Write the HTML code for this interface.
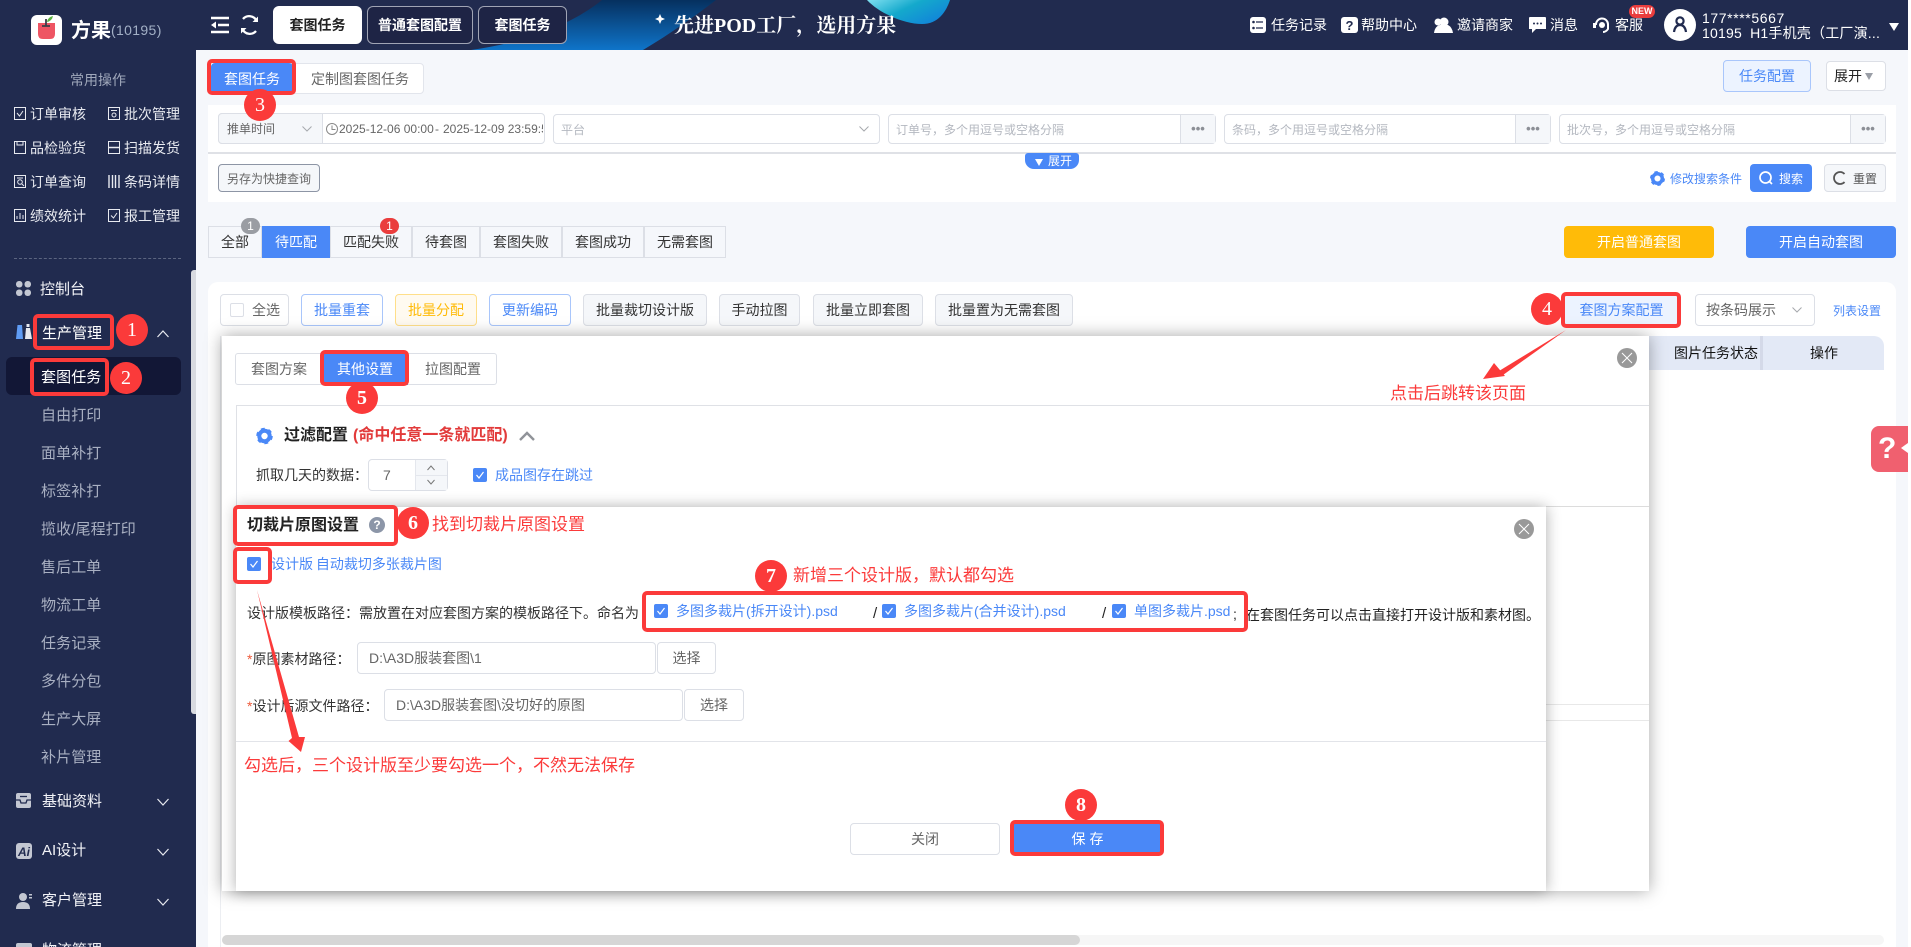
<!DOCTYPE html>
<html lang="zh">
<head>
<meta charset="utf-8">
<title>套图任务</title>
<style>
html,body{margin:0;padding:0;width:1911px;height:947px;overflow:hidden;background:#fff}
body{position:relative;font-family:"Liberation Sans","Noto Sans CJK SC",sans-serif;font-size:14px;color:#333}
*{box-sizing:border-box}
.a{position:absolute}
.t{position:absolute;white-space:nowrap;line-height:20px;height:20px}
.b{position:absolute;display:flex;align-items:center;justify-content:center;white-space:nowrap;border:1px solid #dcdfe6;border-radius:4px}
.r{position:absolute;border:4px solid #fb3a3a;border-radius:5px;pointer-events:none;z-index:50}
.c{position:absolute;width:32px;height:32px;border-radius:50%;background:#fb3a3a;color:#fff;font:20px/32px "Liberation Serif",serif;text-align:center;z-index:51}
.n{position:absolute;z-index:52;color:#fb3a3a;font-size:17px;line-height:24px;height:24px;white-space:nowrap}
.side{color:#e8eaf0;font-size:14px}
.sub{color:#a9b0c2;font-size:15px;left:41px;letter-spacing:.1px}
.main{color:#f2f3f7;font-size:15px;left:42px}
.ph{color:#b4b8c0;font-size:12px}
.hw{color:#fff;font-size:14px;top:15px}
.tab{background:#f5f7fb;border:1px solid #dcdfe6;border-radius:0;color:#333;top:226px;height:32px}
.gb{background:#f5f7fa;color:#333;top:294px;height:32px}
.bb{background:#fff;color:#4a88f7;border-color:#a9c6fb;top:294px;height:32px}
.more{position:absolute;background:#f5f7fa;border-left:1px solid #dcdfe6;top:0;bottom:0;right:0;width:35px;color:#8c8f96;text-align:center;font-size:13px;letter-spacing:0;line-height:27px;font-weight:bold}
.ck{position:absolute;width:14px;height:14px;border-radius:2px;background:#4a88f7;z-index:53}
.ck svg{position:absolute;left:2px;top:2px}
svg{display:block}
.ic{position:absolute;overflow:visible}
</style>
</head>
<body>

<!-- page bg -->
<div class="a" style="left:196px;top:50px;width:1712px;height:897px;background:#f5f7fb"></div>

<!-- top header -->
<div class="a" style="left:0;top:0;width:1908px;height:50px;background:#212b4f;overflow:hidden">
  <svg class="a" style="left:0;top:0" width="1908" height="50">
    <defs>
      <linearGradient id="g1" x1="0" y1="0" x2="0" y2="1"><stop offset="0" stop-color="#06305f"/><stop offset="1" stop-color="#0f74c9"/></linearGradient>
      <linearGradient id="g2" x1="0" y1="0" x2="1" y2="0.6"><stop offset="0" stop-color="#7fe0f0"/><stop offset=".5" stop-color="#14a9cc"/><stop offset="1" stop-color="#1286d8"/></linearGradient>
    </defs>
    <path d="M602 0 C575 22 530 42 471 50 L643 50 C670 34 695 16 716 0 Z" fill="url(#g1)"/>
    <path d="M867 0 C880 14 905 24 922 24 C938 24 946 12 950 0 Z" fill="url(#g2)"/>
    <path d="M660 14 L661.5 17.5 L665 19 L661.5 20.5 L660 24 L658.500 20.500 L655 19 L658.500 17.500 Z" fill="#fff"/>
  </svg>
</div>
<div class="a" style="left:0;top:0;width:196px;height:947px;background:#212b4f"></div>
<div class="a" style="left:191px;top:270px;width:5px;height:444px;background:#d8dae0;border-radius:3px 0 0 3px"></div>

<!-- logo -->
<div class="a" style="left:31px;top:15px;width:31px;height:30px;background:#fff;border-radius:6px"></div>
<svg class="ic" style="left:31px;top:15px" width="31" height="30"><path d="M7 8 H24 V19 Q24 24 19 24 H12 Q7 24 7 19 Z" fill="#ee5563"/><path d="M15 4 V11 M11 11 H19" stroke="#3b3f4a" stroke-width="1.800" fill="none"/><path d="M16 7 Q17 2 22 1 Q21 6 16 7Z" fill="#5bb341"/></svg>
<div class="t" style="left:71px;top:20px;color:#fff;font-size:20px;font-weight:bold;line-height:22px;height:22px">方果</div>
<div class="t" style="left:111px;top:20px;color:#a3b0c6;font-size:14px;letter-spacing:.35px">(10195)</div>

<!-- header controls -->
<svg class="ic" style="left:211px;top:17px" width="18" height="16"><path d="M0 1 H18 M7 8 H18 M0 15 H18" stroke="#fff" stroke-width="2.400"/><path d="M5 4.500 L0 8 L5 11.500 Z" fill="#fff"/></svg>
<svg class="ic" style="left:240px;top:15px" width="19" height="20" fill="none" stroke="#fff" stroke-width="2.300"><path d="M16.500 6 A8 8 0 0 0 3 4"/><path d="M2.500 14 A8 8 0 0 0 16 16"/><path d="M18 1.500 V7 H12.500" stroke-width="0" fill="#fff"/><path d="M1 18.500 V13 H6.500" stroke-width="0" fill="#fff"/></svg>
<div class="b" style="left:273px;top:6px;width:89px;height:38px;background:#fff;border:0;border-radius:6px;color:#222;font-weight:bold">套图任务</div>
<div class="b" style="left:367px;top:6px;width:106px;height:38px;background:#1e2445;border-color:#a0a4b4;border-radius:6px;color:#fff;font-weight:bold">普通套图配置</div>
<div class="b" style="left:478px;top:6px;width:89px;height:38px;background:#1e2445;border-color:#a0a4b4;border-radius:6px;color:#fff;font-weight:bold">套图任务</div>
<div class="t" style="left:674px;top:13px;color:#fff;font-family:'Liberation Serif','Noto Serif CJK SC',serif;font-size:20px;line-height:26px;height:26px;font-weight:bold">先进POD工厂，选用方果</div>

<!-- header right -->
<svg class="ic" style="left:1250px;top:17px" width="16" height="16"><rect width="16" height="16" rx="3" fill="#fff"/><path d="M6 5 H13 M6 11 H13" stroke="#212b4f" stroke-width="1.300"/><circle cx="3.500" cy="5" r="1.300" fill="#212b4f"/><circle cx="3.500" cy="11" r="1.300" fill="#212b4f"/></svg>
<div class="t hw" style="left:1271px">任务记录</div>
<svg class="ic" style="left:1341px;top:17px" width="17" height="16"><rect width="17" height="16" rx="3" fill="#fff"/><text x="8.500" y="13" text-anchor="middle" font-size="13" font-weight="bold" fill="#212b4f" font-family="Liberation Sans">?</text></svg>
<div class="t hw" style="left:1361px">帮助中心</div>
<svg class="ic" style="left:1433px;top:17px" width="20" height="16"><circle cx="11" cy="5" r="4.500" fill="#fff"/><path d="M1 16 Q2 9 7 8 L15 8 Q19 10 20 16 Z" fill="#fff"/><circle cx="5" cy="5" r="3.500" fill="#fff"/></svg>
<div class="t hw" style="left:1457px">邀请商家</div>
<svg class="ic" style="left:1529px;top:17px" width="17" height="16"><path d="M0 1 Q0 0 1 0 H16 Q17 0 17 1 V12 H7 L3 16 V12 H0 Z" fill="#fff"/><circle cx="5" cy="6.500" r="1" fill="#212b4f"/><circle cx="8.500" cy="6.500" r="1" fill="#212b4f"/><circle cx="12" cy="6.500" r="1" fill="#212b4f"/></svg>
<div class="t hw" style="left:1550px">消息</div>
<svg class="ic" style="left:1593px;top:17px" width="17" height="16" fill="none" stroke="#fff" stroke-width="2"><path d="M3 8 A6 6 0 0 1 15 7 V12 Q13 15 10 15"/><rect x="0" y="6" width="3" height="5" fill="#fff" stroke="none"/><circle cx="9" cy="8" r="3" fill="#fff" stroke="none"/></svg>
<div class="t hw" style="left:1615px">客服</div>
<div class="a" style="left:1629px;top:5px;width:26px;height:13px;background:#ea3d3d;border-radius:7px;color:#fff;font-size:9px;font-weight:bold;text-align:center;line-height:13px;z-index:3">NEW</div>
<div class="a" style="left:1664px;top:9px;width:32px;height:32px;border-radius:50%;background:#fff"></div>
<svg class="ic" style="left:1672px;top:16px" width="16" height="17" fill="none" stroke="#212b4f" stroke-width="2.200"><circle cx="8" cy="5" r="3.600"/><path d="M2 16 Q3 9 8 9 Q13 9 14 16"/></svg>
<div class="t" style="left:1702px;top:8px;color:#fff;letter-spacing:.6px">177****5667</div>
<div class="t" style="left:1702px;top:23px;color:#fff;letter-spacing:.2px">10195&nbsp; H1手机壳（工厂演...</div>
<div class="a" style="left:1889px;top:23px;width:0;height:0;border:5px solid transparent;border-top:8px solid #fff"></div>

<!-- sidebar quick -->
<div class="t" style="left:70px;top:70px;color:#a0a8bb">常用操作</div>
<svg class="ic" style="left:14px;top:107px" width="12" height="13" fill="none" stroke="#e8eaf0"><rect x=".5" y=".5" width="11" height="12"/><path d="M3 6 L5.500 9 L9 4"/></svg>
<div class="t side" style="left:30px;top:104px">订单审核</div>
<svg class="ic" style="left:108px;top:107px" width="12" height="13" fill="none" stroke="#e8eaf0"><rect x=".5" y=".5" width="11" height="12"/><path d="M3 3.500 H9"/><circle cx="6" cy="8" r="2"/></svg>
<div class="t side" style="left:124px;top:104px">批次管理</div>
<svg class="ic" style="left:14px;top:141px" width="12" height="13" fill="none" stroke="#e8eaf0"><rect x=".5" y=".5" width="11" height="12"/><path d="M3 .5 V4 H9 V.5"/></svg>
<div class="t side" style="left:30px;top:138px">品检验货</div>
<svg class="ic" style="left:108px;top:141px" width="12" height="13" fill="none" stroke="#e8eaf0"><rect x=".5" y=".5" width="11" height="12"/><path d="M0 6.500 H12" stroke-width="1.500"/></svg>
<div class="t side" style="left:124px;top:138px">扫描发货</div>
<svg class="ic" style="left:14px;top:175px" width="12" height="13" fill="none" stroke="#e8eaf0"><rect x=".5" y=".5" width="11" height="12"/><circle cx="6" cy="7" r="2.300"/><path d="M8 9 L10 11 M3 3 H9"/></svg>
<div class="t side" style="left:30px;top:172px">订单查询</div>
<svg class="ic" style="left:108px;top:175px" width="12" height="13" stroke="#e8eaf0"><path d="M1 0 V13 M4.500 0 V13 M7.500 0 V13 M11 0 V13" stroke-width="1.400"/></svg>
<div class="t side" style="left:124px;top:172px">条码详情</div>
<svg class="ic" style="left:14px;top:209px" width="12" height="13" fill="none" stroke="#e8eaf0"><rect x=".5" y=".5" width="11" height="12"/><path d="M3 10 V7 M6 10 V4 M9 10 V6"/></svg>
<div class="t side" style="left:30px;top:206px">绩效统计</div>
<svg class="ic" style="left:108px;top:209px" width="12" height="13" fill="none" stroke="#e8eaf0"><rect x=".5" y=".5" width="11" height="12"/><path d="M3 6.500 L5.500 9 L9 4"/></svg>
<div class="t side" style="left:124px;top:206px">报工管理</div>
<div class="a" style="left:14px;top:258px;width:167px;border-top:1px dashed #5c6580"></div>

<!-- sidebar menu -->
<svg class="ic" style="left:16px;top:281px" width="15" height="15" fill="#c3c7d2"><rect width="6.500" height="6.500" rx="3"/><rect x="8.500" width="6.500" height="6.500" rx="3"/><rect y="8.500" width="6.500" height="6.500" rx="3"/><rect x="8.500" y="8.500" width="6.500" height="6.500" rx="3"/></svg>
<div class="t main" style="left:40px;top:280px">控制台</div>
<svg class="ic" style="left:16px;top:324px" width="16" height="15"><path d="M0 15 L1.500 1 H6 L7 15 Z" fill="#5f9cf5"/><path d="M9 15 L10 4 H14 L16 15 Z" fill="#e8eaf0"/><rect x="10.500" y="0" width="3" height="3" fill="#e8eaf0"/></svg>
<div class="t main" style="left:42px;top:324px;color:#fff">生产管理</div>
<svg class="ic" style="left:157px;top:330px" width="12" height="8" fill="none" stroke="#e8eaf0" stroke-width="1.200"><path d="M.5 7 L6 1 L11.500 7"/></svg>
<div class="a" style="left:6px;top:357px;width:175px;height:38px;background:#121736;border-radius:6px"></div>
<div class="t sub" style="top:368px;color:#fff">套图任务</div>
<div class="t sub" style="top:406px">自由打印</div>
<div class="t sub" style="top:444px">面单补打</div>
<div class="t sub" style="top:482px">标签补打</div>
<div class="t sub" style="top:520px">揽收/尾程打印</div>
<div class="t sub" style="top:558px">售后工单</div>
<div class="t sub" style="top:596px">物流工单</div>
<div class="t sub" style="top:634px">任务记录</div>
<div class="t sub" style="top:672px">多件分包</div>
<div class="t sub" style="top:710px">生产大屏</div>
<div class="t sub" style="top:748px">补片管理</div>
<svg class="ic" style="left:16px;top:793px" width="15" height="15"><rect width="15" height="15" rx="2" fill="#c3c7d2"/><path d="M0 7 H4 L5 10 H10 L11 7 H15" stroke="#212b4f" stroke-width="1.300" fill="none"/><path d="M4 3.500 H11" stroke="#212b4f" stroke-width="1.300"/></svg>
<div class="t main" style="top:792px">基础资料</div>
<svg class="ic" style="left:157px;top:798px" width="12" height="8" fill="none" stroke="#e8eaf0" stroke-width="1.200"><path d="M.5 1 L6 7 L11.500 1"/></svg>
<svg class="ic" style="left:16px;top:843px" width="16" height="16"><rect width="16" height="16" rx="3" fill="#c3c7d2"/><text x="8" y="13" text-anchor="middle" font-size="12" font-weight="bold" font-style="italic" fill="#212b4f" font-family="Liberation Sans">Ai</text></svg>
<div class="t main" style="top:841px">AI设计</div>
<svg class="ic" style="left:157px;top:848px" width="12" height="8" fill="none" stroke="#e8eaf0" stroke-width="1.200"><path d="M.5 1 L6 7 L11.500 1"/></svg>
<svg class="ic" style="left:16px;top:893px" width="16" height="16" fill="#c3c7d2"><circle cx="7" cy="4" r="4"/><path d="M0 16 Q0 9 7 9 Q14 9 14 16 Z"/><rect x="13" y="1" width="3" height="1.500"/><rect x="13" y="4" width="3" height="1.500"/></svg>
<div class="t main" style="top:891px">客户管理</div>
<svg class="ic" style="left:157px;top:898px" width="12" height="8" fill="none" stroke="#e8eaf0" stroke-width="1.200"><path d="M.5 1 L6 7 L11.500 1"/></svg>
<div class="t main" style="top:941px">物流管理</div>
<svg class="ic" style="left:16px;top:943px" width="16" height="8" fill="#c3c7d2"><rect width="16" height="8" rx="2"/></svg>

<!-- main tabs -->
<div class="b" style="left:211px;top:63px;width:213px;height:31px;background:#fff;border-color:#e2e5ec"></div>
<div class="b" style="left:211px;top:63px;width:82px;height:31px;background:#4a88f7;border:0;color:#fff">套图任务</div>
<div class="t" style="left:311px;top:69px;color:#666">定制图套图任务</div>
<div class="b" style="left:1723px;top:60px;width:88px;height:32px;background:#ecf3ff;border-color:#a9c6fb;color:#4a88f7">任务配置</div>
<div class="b" style="left:1826px;top:61px;width:60px;height:30px;background:#fff;color:#222;justify-content:flex-start;padding-left:7px">展开</div>
<div class="a" style="left:1865px;top:73px;width:0;height:0;border:4.500px solid transparent;border-top:7px solid #9a9ea6"></div>

<!-- search panel -->
<div class="a" style="left:208px;top:105px;width:1688px;height:97px;background:#fff"></div>
<div class="b" style="left:218px;top:113px;width:327px;height:31px;background:#fff"></div>
<div class="b" style="left:218px;top:113px;width:105px;height:31px;background:#f5f7fa;border-radius:4px 0 0 4px"></div>
<div class="t" style="left:227px;top:119px;font-size:12px;color:#666">推单时间</div>
<svg class="ic" style="left:302px;top:126px" width="10" height="6" fill="none" stroke="#a6a9ad"><path d="M.5 .5 L5 5 L9.500 .5"/></svg>
<svg class="ic" style="left:326px;top:123px" width="12" height="12" fill="none" stroke="#888"><circle cx="6" cy="6" r="5.500"/><path d="M6 2.500 V6.500 H9.500"/></svg>
<div class="a" style="left:339px;top:119px;width:95px;height:20px;overflow:hidden;white-space:nowrap;font-size:12px;line-height:20px;color:#666">2025-12-06 00:00:00</div>
<div class="a" style="left:435px;top:119px;width:8px;height:20px;font-size:12px;line-height:20px;color:#666">-</div>
<div class="a" style="left:443px;top:119px;width:100px;height:20px;overflow:hidden;white-space:nowrap;font-size:12px;line-height:20px;color:#666">2025-12-09 23:59:59</div>
<div class="b" style="left:553px;top:114px;width:327px;height:30px;background:#fff"></div>
<div class="t ph" style="left:561px;top:120px">平台</div>
<svg class="ic" style="left:859px;top:126px" width="10" height="6" fill="none" stroke="#a6a9ad"><path d="M.5 .5 L5 5 L9.500 .5"/></svg>
<div class="b" style="left:888px;top:114px;width:328px;height:30px;background:#fff"><div class="more">•••</div></div>
<div class="t ph" style="left:896px;top:120px">订单号，多个用逗号或空格分隔</div>
<div class="b" style="left:1224px;top:114px;width:327px;height:30px;background:#fff"><div class="more">•••</div></div>
<div class="t ph" style="left:1232px;top:120px">条码，多个用逗号或空格分隔</div>
<div class="b" style="left:1559px;top:114px;width:327px;height:30px;background:#fff"><div class="more">•••</div></div>
<div class="t ph" style="left:1567px;top:120px">批次号，多个用逗号或空格分隔</div>
<div class="a" style="left:208px;top:152px;width:1688px;height:2px;background:#dfe1e6"></div>
<div class="a" style="left:1025px;top:153px;width:54px;height:16px;background:#4a88f7;border-radius:3px 3px 9px 9px;color:#fff;font-size:12px;line-height:16px;padding-left:13px;text-indent:10px">展开</div>
<div class="a" style="left:1035px;top:159px;width:0;height:0;border:4px solid transparent;border-top:7px solid #fff"></div>
<div class="b" style="left:218px;top:164px;width:102px;height:28px;background:#f5f7fa;border-color:#8d95a5;color:#666;font-size:12px">另存为快捷查询</div>
<svg class="ic" style="left:1650px;top:171px" width="15" height="15"><circle cx="7.500" cy="7.500" r="4.800" fill="none" stroke="#4a88f7" stroke-width="3.500"/><circle cx="7.500" cy="7.500" r="6.300" fill="none" stroke="#4a88f7" stroke-width="2.400" stroke-dasharray="3.300 3.300"/></svg>
<div class="t" style="left:1670px;top:169px;font-size:12px;color:#4a88f7">修改搜索条件</div>
<div class="b" style="left:1750px;top:164px;width:62px;height:28px;background:#4a88f7;border:0;"></div>
<svg class="ic" style="left:1759px;top:171px" width="14" height="14" fill="none" stroke="#fff" stroke-width="1.700"><circle cx="6.500" cy="6.500" r="5.500"/><path d="M10 10 L13 13"/></svg>
<div class="t" style="left:1779px;top:169px;font-size:12px;color:#fff">搜索</div>
<div class="b" style="left:1824px;top:164px;width:62px;height:28px;background:#f5f7fa"></div>
<svg class="ic" style="left:1832px;top:171px" width="14" height="14" fill="none" stroke="#555" stroke-width="1.800"><path d="M12.500 3 A6 6 0 1 0 12.500 11"/></svg>
<div class="t" style="left:1853px;top:169px;font-size:12px;color:#555">重置</div>

<!-- status tabs -->
<div class="b tab" style="left:208px;width:54px">全部</div>
<div class="b tab" style="left:262px;width:68px;background:#4a88f7;color:#fff;border-color:#4a88f7">待匹配</div>
<div class="b tab" style="left:330px;width:82px">匹配失败</div>
<div class="b tab" style="left:412px;width:68px">待套图</div>
<div class="b tab" style="left:480px;width:82px">套图失败</div>
<div class="b tab" style="left:562px;width:82px">套图成功</div>
<div class="b tab" style="left:644px;width:82px">无需套图</div>
<div class="a" style="left:241px;top:218px;width:19px;height:16px;border-radius:8px;background:#9a9da3;color:#fff;font-size:12px;line-height:16px;text-align:center">1</div>
<div class="a" style="left:380px;top:218px;width:19px;height:16px;border-radius:8px;background:#ea3d3d;color:#fff;font-size:12px;line-height:16px;text-align:center">1</div>
<div class="b" style="left:1564px;top:226px;width:150px;height:32px;background:#ffbb08;border:0;color:#fff">开启普通套图</div>
<div class="b" style="left:1746px;top:226px;width:150px;height:32px;background:#4a88f7;border:0;color:#fff">开启自动套图</div>

<!-- main card -->
<div class="a" style="left:208px;top:282px;width:1688px;height:665px;background:#fff;border-radius:10px 10px 0 0"></div>
<div class="a" style="left:220px;top:336px;width:1px;height:611px;background:#eceef2"></div>
<div class="b" style="left:220px;top:294px;width:69px;height:32px;background:#fff;justify-content:flex-start"></div>
<div class="a" style="left:230px;top:303px;width:14px;height:14px;border:1px solid #dcdfe6;border-radius:2px"></div>
<div class="t" style="left:252px;top:300px;color:#666">全选</div>
<div class="b bb" style="left:301px;width:82px">批量重套</div>
<div class="b" style="left:395px;top:294px;width:82px;height:32px;background:#fffaf0;border-color:#ffdf8a;color:#ffbb08">批量分配</div>
<div class="b bb" style="left:489px;width:82px">更新编码</div>
<div class="b gb" style="left:583px;width:124px">批量裁切设计版</div>
<div class="b gb" style="left:719px;width:81px">手动拉图</div>
<div class="b gb" style="left:813px;width:110px">批量立即套图</div>
<div class="b gb" style="left:935px;width:138px">批量置为无需套图</div>
<div class="b" style="left:1562px;top:293px;width:119px;height:34px;background:#ecf3ff;border:0;color:#4a88f7">套图方案配置</div>
<div class="b" style="left:1695px;top:294px;width:120px;height:32px;background:#fff;color:#666;justify-content:flex-start;padding-left:10px">按条码展示</div>
<svg class="ic" style="left:1792px;top:307px" width="10" height="6" fill="none" stroke="#a6a9ad"><path d="M.5 .5 L5 5 L9.500 .5"/></svg>
<div class="t" style="left:1833px;top:301px;font-size:12px;color:#4a88f7">列表设置</div>

<!-- table head -->
<div class="a" style="left:1500px;top:336px;width:384px;height:34px;background:#e3e9f6;border-radius:0 10px 0 0"></div>
<div class="a" style="left:1760px;top:336px;width:3px;height:34px;background:#d4d9e8"></div>
<div class="t" style="left:1674px;top:343px;color:#111">图片任务状态</div>
<div class="t" style="left:1810px;top:343px;color:#111">操作</div>

<!-- help tab -->
<div class="a" style="left:1871px;top:426px;width:37px;height:46px;background:#f0606f;border-radius:8px 0 0 8px;color:#fff;font-size:30px;font-weight:bold;line-height:46px;padding-left:7px">?</div>
<div class="a" style="left:1901px;top:443px;width:0;height:0;border:5px solid transparent;border-right:7px solid #fff;border-left:0"></div>

<!-- page right strip -->
<div class="a" style="left:1908px;top:0;width:3px;height:947px;background:#fff"></div>

<!-- scrollbar -->
<div class="a" style="left:222px;top:935px;width:1662px;height:10px;background:#f6f6f6;border-radius:5px"></div>
<div class="a" style="left:222px;top:935px;width:858px;height:10px;background:#d6d6d6;border-radius:5px"></div>

<!-- modal 1 -->
<div class="a" style="left:222px;top:336px;width:1427px;height:555px;background:#fff;box-shadow:0 0 16px rgba(0,0,0,.35)"></div>
<div class="a" style="left:235px;top:353px;width:262px;height:32px;background:#fff;border:1px solid #dcdfe6;border-radius:3px"></div>
<div class="t" style="left:251px;top:359px;color:#666">套图方案</div>
<div class="b" style="left:322px;top:353px;width:86px;height:32px;background:#4a88f7;border:0;border-radius:0;color:#fff">其他设置</div>
<div class="t" style="left:425px;top:359px;color:#666">拉图配置</div>
<div class="a" style="left:236px;top:405px;width:1413px;height:1px;background:#dfe1e6"></div>
<div class="a" style="left:236px;top:405px;width:1px;height:110px;background:#dfe1e6"></div>
<svg class="ic" style="left:256px;top:427px" width="17" height="18"><circle cx="8.500" cy="9" r="5.200" fill="none" stroke="#4a88f7" stroke-width="4"/><circle cx="8.500" cy="9" r="7" fill="none" stroke="#4a88f7" stroke-width="2.600" stroke-dasharray="3.700 3.630"/></svg>
<div class="t" style="left:284px;top:426px;font-size:16px;font-weight:bold;color:#222">过滤配置</div>
<div class="t" style="left:353px;top:426px;font-size:16px;font-weight:bold;color:#e23b3b">(命中任意一条就匹配)</div>
<svg class="ic" style="left:519px;top:431px" width="16" height="10" fill="none" stroke="#909399" stroke-width="2.400"><path d="M1 9 L8 2 L15 9"/></svg>
<div class="t" style="left:256px;top:465px;color:#333">抓取几天的数据：</div>
<div class="b" style="left:368px;top:459px;width:80px;height:32px;background:#fff"></div>
<div class="a" style="left:415px;top:460px;width:32px;height:30px;background:#f5f7fa;border-left:1px solid #e4e7ed"></div>
<div class="a" style="left:416px;top:475px;width:31px;height:1px;background:#e4e7ed"></div>
<svg class="ic" style="left:427px;top:465px" width="8" height="20" fill="none" stroke="#777"><path d="M.5 5 L4 1 L7.500 5 M.5 15 L4 19 L7.500 15"/></svg>
<div class="t" style="left:383px;top:465px;color:#666">7</div>
<div class="ck" style="left:473px;top:468px"><svg width="10" height="10" fill="none" stroke="#fff" stroke-width="1.200"><path d="M1.500 5 L4 8 L8.500 2"/></svg></div>
<div class="t" style="left:495px;top:465px;color:#4a88f7">成品图存在跳过</div>
<div class="a" style="left:1617px;top:348px;width:20px;height:20px;border-radius:50%;background:#999"></div>
<svg class="ic" style="left:1621px;top:352px" width="12" height="12" stroke="#fff"><path d="M1 1 L11 11 M11 1 L1 11"/></svg>
<div class="a" style="left:1546px;top:506px;width:103px;height:1px;background:#dcdcdc"></div>
<div class="a" style="left:1546px;top:704px;width:103px;height:1px;background:#e8e8e8"></div>
<div class="a" style="left:1546px;top:720px;width:103px;height:1px;background:#e8e8e8"></div>

<!-- modal 2 -->
<div class="a" style="left:236px;top:507px;width:1310px;height:384px;background:#fff;box-shadow:0 0 14px rgba(0,0,0,.32)"></div>
<div class="t" style="left:247px;top:516px;font-size:16px;font-weight:bold;color:#222">切裁片原图设置</div>
<div class="a" style="left:369px;top:517px;width:16px;height:16px;border-radius:50%;background:#8c96a8;color:#fff;font-size:12px;font-weight:bold;line-height:16px;text-align:center">?</div>
<div class="a" style="left:1514px;top:519px;width:20px;height:20px;border-radius:50%;background:#999"></div>
<svg class="ic" style="left:1518px;top:523px" width="12" height="12" stroke="#fff"><path d="M1 1 L11 11 M11 1 L1 11"/></svg>
<div class="ck" style="left:247px;top:557px"><svg width="10" height="10" fill="none" stroke="#fff" stroke-width="1.200"><path d="M1.500 5 L4 8 L8.500 2"/></svg></div>
<div class="t" style="left:271px;top:554px;color:#4a88f7;word-spacing:-1px">设计版 自动裁切多张裁片图</div>
<div class="t" style="left:247px;top:603px;color:#333">设计版模板路径：需放置在对应套图方案的模板路径下。命名为</div>
<div class="ck" style="left:654px;top:604px"><svg width="10" height="10" fill="none" stroke="#fff" stroke-width="1.200"><path d="M1.500 5 L4 8 L8.500 2"/></svg></div>
<div class="t" style="left:676px;top:601px;color:#4a88f7">多图多裁片(拆开设计).psd</div>
<div class="t" style="left:873px;top:604px;color:#222;font-size:15px">/</div>
<div class="ck" style="left:882px;top:604px"><svg width="10" height="10" fill="none" stroke="#fff" stroke-width="1.200"><path d="M1.500 5 L4 8 L8.500 2"/></svg></div>
<div class="t" style="left:904px;top:601px;color:#4a88f7">多图多裁片(合并设计).psd</div>
<div class="t" style="left:1102px;top:604px;color:#222;font-size:15px">/</div>
<div class="ck" style="left:1112px;top:604px"><svg width="10" height="10" fill="none" stroke="#fff" stroke-width="1.200"><path d="M1.500 5 L4 8 L8.500 2"/></svg></div>
<div class="t" style="left:1134px;top:601px;color:#4a88f7">单图多裁片.psd</div>
<div class="t" style="left:1233px;top:604px;color:#222">;</div>
<div class="t" style="left:1246px;top:605px;color:#222">在套图任务可以点击直接打开设计版和素材图。</div>

<div class="t" style="left:247px;top:649px;color:#333"><span style="color:#ee5a3a">*</span>原图素材路径：</div>
<div class="b" style="left:357px;top:642px;width:299px;height:32px;background:#fff;justify-content:flex-start;padding-left:11px;color:#666">D:\A3D服装套图\1</div>
<div class="b" style="left:657px;top:642px;width:59px;height:32px;background:#fff;color:#666">选择</div>
<div class="t" style="left:247px;top:696px;color:#333"><span style="color:#ee5a3a">*</span>设计后源文件路径：</div>
<div class="b" style="left:384px;top:689px;width:299px;height:32px;background:#fff;justify-content:flex-start;padding-left:11px;color:#666">D:\A3D服装套图\没切好的原图</div>
<div class="b" style="left:684px;top:689px;width:60px;height:32px;background:#fff;color:#666">选择</div>
<div class="a" style="left:236px;top:741px;width:1310px;height:1px;background:#e2e4e9"></div>
<div class="b" style="left:850px;top:823px;width:150px;height:32px;background:#fff;color:#666">关闭</div>
<div class="b" style="left:1012px;top:823px;width:151px;height:32px;background:#4a88f7;border:0;color:#fff;letter-spacing:4px;padding-left:4px">保存</div>

<!-- annotations -->
<div class="r" style="left:207px;top:59px;width:89px;height:36px"></div>
<div class="r" style="left:33px;top:314px;width:81px;height:36px"></div>
<div class="r" style="left:30px;top:358px;width:79px;height:38px"></div>
<div class="r" style="left:1561px;top:292px;width:120px;height:36px"></div>
<div class="r" style="left:320px;top:350px;width:89px;height:36px"></div>
<div class="r" style="left:233px;top:505px;width:165px;height:41px"></div>
<div class="r" style="left:233px;top:547px;width:39px;height:37px"></div>
<div class="r" style="left:642px;top:591px;width:606px;height:41px"></div>
<div class="r" style="left:1010px;top:820px;width:154px;height:36px"></div>

<div class="c" style="left:116px;top:314px">1</div>
<div class="c" style="left:110px;top:362px">2</div>
<div class="c" style="left:244px;top:89px">3</div>
<div class="c" style="left:1531px;top:293px">4</div>
<div class="c" style="left:346px;top:382px;font-weight:bold">5</div>
<div class="c" style="left:397px;top:507px;font-weight:bold">6</div>
<div class="c" style="left:755px;top:560px;font-weight:bold">7</div>
<div class="c" style="left:1065px;top:789px;font-weight:bold">8</div>

<div class="n" style="left:1390px;top:382px">点击后跳转该页面</div>
<div class="n" style="left:432px;top:513px">找到切裁片原图设置</div>
<div class="n" style="left:793px;top:564px">新增三个设计版，默认都勾选</div>
<div class="n" style="left:244px;top:754px">勾选后，三个设计版至少要勾选一个，不然无法保存</div>

<svg class="a" style="left:0;top:0;z-index:49;pointer-events:none" width="1911" height="947">
  <path d="M1566 330 L1499 371 L1503 375 Z" fill="#fb3a3a"/>
  <path d="M1483 379 L1494 363 L1505 376 Z" fill="#fb3a3a"/>
  <path d="M257 590 L292 738 L288.500 741 L301 752 L305 737 L299 737 Z" fill="#fb3a3a"/>
</svg>

</body>
</html>
